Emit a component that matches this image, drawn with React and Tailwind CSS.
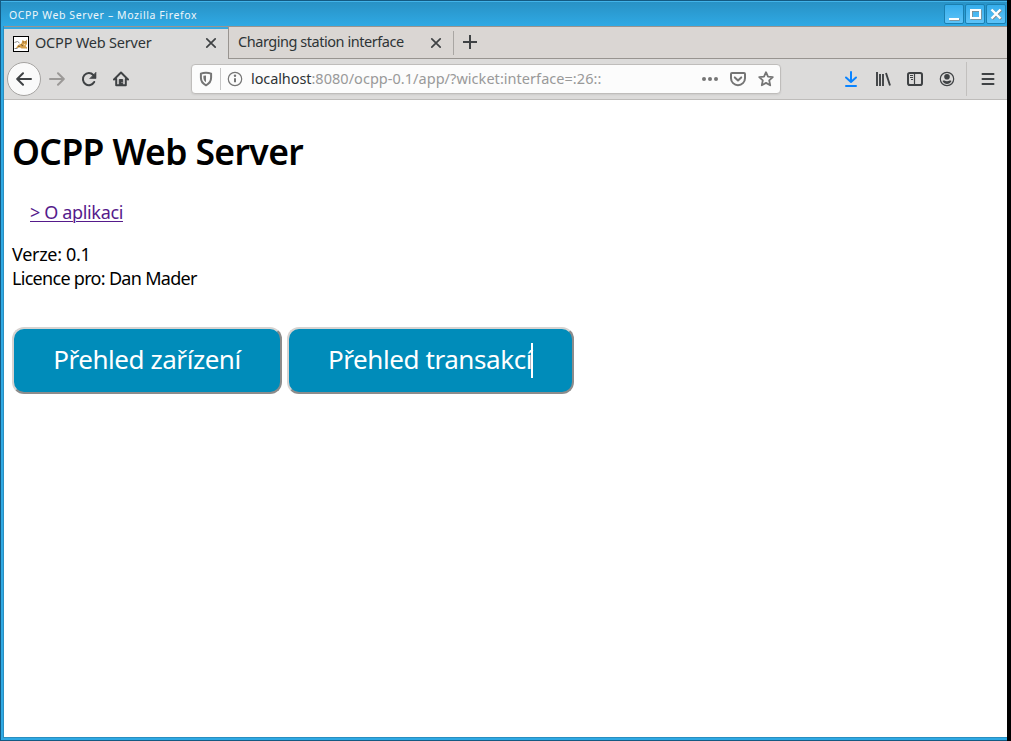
import React from "react";

function TitleButton({ children }) {
  return (
    <div className="h-5 w-5 rounded-[2px] border border-[#1b7fb0] bg-linear-to-b from-[#35adeb] to-[#5cc3f8]">
      <svg className="block h-[18px] w-[18px]" viewBox="0 0 18 18" fill="none" strokeWidth="2">
        <g stroke="#8b8580" transform="translate(.7 .7)">{children}</g>
        <g stroke="#ffffff">{children}</g>
      </svg>
    </div>
  );
}

function Icon({ className = "", children }) {
  return (
    <svg
      className={"block h-4 w-4 shrink-0 " + className}
      viewBox="0 0 16 16"
      fill="none"
      stroke="currentColor"
      strokeWidth="2"
      strokeLinecap="round"
      strokeLinejoin="round"
    >
      {children}
    </svg>
  );
}

function CloseIcon() {
  return (
    <Icon className="text-[#3f4244]">
      <path d="M3.8 3.8l8.4 8.4M12.2 3.8l-8.4 8.4" strokeWidth="1.7" />
    </Icon>
  );
}

function CatIcon() {
  return (
    <svg className="-mt-px block h-4 w-4 shrink-0" viewBox="0 0 16 16">
      <rect x=".5" y=".5" width="15" height="15" fill="#fff" stroke="#000" />
      <path d="M1.5 6.500l3-1 2 1.500M1.500 12.500h3M12 11l2 1" stroke="#888" fill="none" />
      <path d="M3 12l2-3 3.500-1.500 1-3.500 1.500 1h1.500l1.500-1.500v4.500l-1.500 2 1.500 1.500v1H8.500l-2-1.500-1.500 1z" fill="#d6a04a" />
      <path d="M9.800 6h1M12.200 6h1M5 10l2 1M8 8.500l2 1.500" stroke="#5d4526" strokeWidth=".8" />
      <path d="M10.500 8.200h2l-1 1.300z" fill="#fff4d8" />
    </svg>
  );
}

function Tabs() {
  return (
    <div className="flex h-[33px] border-t border-[#989490] bg-[#dad6d3]">
      <div className="flex h-8 w-[224px] items-center border-t-2 border-[#35a8e0] bg-[#dcdbda] pl-[9px] pr-[9px]">
        <CatIcon />
        <span className="ml-[6px] -mt-[5px] text-[14.5px] leading-5 tracking-[-0.2px]">OCPP Web Server</span>
        <div className="ml-auto -mt-[2px]"><CloseIcon /></div>
      </div>
      <div className="flex flex-1 items-center border-b border-l border-[#989490] pt-px">
        <span className="ml-[9px] -mt-[4px] w-[181px] whitespace-nowrap text-[14.5px] leading-5 tracking-[-0.46px]">Charging station interface</span>
        <div className="ml-[9px] -mt-px"><CloseIcon /></div>
        <div className="ml-[9px] -mt-px h-6 w-px bg-[#a9a6a3]" />
        <Icon className="ml-2 -mt-[2px] text-[#3f4244]">
          <path d="M8 1v14M1 8h14" strokeLinecap="butt" />
        </Icon>
      </div>
    </div>
  );
}

function Toolbar() {
  return (
    <div className="flex h-[41px] items-center border-b border-[#bebcba] bg-[#dcdbda] pl-[3px] text-[#3f4244]">
      <div className="flex h-[34px] w-[34px] items-center justify-center rounded-full border border-[#a5a3a1] bg-[#fafafa]">
        <Icon><path d="M15 8H1.500M7 2.200L1.200 8 7 13.800" /></Icon>
      </div>
      <Icon className="ml-2 text-[#9b9997]"><path d="M1 8h13.500M9 2.200L14.800 8 9 13.800" /></Icon>
      <Icon className="ml-4">
        <path d="M13.200 11A6 6 0 1 1 12.300 4" />
        <path d="M15 1.500v6H9z" fill="currentColor" strokeWidth=".6" />
      </Icon>
      <Icon className="ml-4">
        <path d="M1 8.500L8 1.500l7 7M3.200 8v6.200h9.600V8" />
        <path d="M6.300 14V8.500h3.400V14z" fill="currentColor" strokeWidth="1" />
        <circle cx="9" cy="11.400" r=".5" fill="#dcdbda" stroke="none" />
      </Icon>
      <div className="ml-[62px] flex h-[30px] w-[590px] items-center rounded-[4px] border border-[#bfbdbb] bg-[#fcfcfc] pl-[6px] pr-[6px] text-[#757575] shadow-[0_1px_2px_rgba(0,0,0,0.07)]">
        <Icon>
          <path d="M8 1.700c1.700 0 3.600.3 5.100.9v4c0 3.800-2 6.300-5.100 7.700-3.100-1.400-5.100-3.900-5.100-7.700v-4C4.400 2 6.300 1.700 8 1.700z" />
          <path d="M8 4.500v6.800C6.100 10 5.400 8.600 5.400 6.300V4.800z" fill="currentColor" stroke="none" />
        </Icon>
        <div className="ml-[6px] h-[22px] w-px bg-[#c6c6c6]" />
        <Icon className="ml-[6px]">
          <circle cx="8" cy="8" r="6.700" strokeWidth="1.200" />
          <path d="M8 7.300v4" strokeLinecap="butt" />
          <circle cx="8" cy="4.700" r="1.200" fill="currentColor" stroke="none" />
        </Icon>
        <span className="ml-[8px] -mt-[2px] whitespace-nowrap text-[14.5px] leading-5 tracking-[0.04px] text-[#999999]">
          <span className="tracking-[-0.1px] text-[#2e3436]">localhost</span>:8080/ocpp-0.1/app/?wicket:interface=:26::
        </span>
        <Icon className="ml-auto">
          <g fill="currentColor" stroke="none">
            <circle cx="2" cy="8" r="2" /><circle cx="8" cy="8" r="2" /><circle cx="14" cy="8" r="2" />
          </g>
        </Icon>
        <Icon className="ml-3">
          <path d="M2 2h12a1 1 0 0 1 1 1v4.200a7 7 0 0 1-14 0V3a1 1 0 0 1 1-1z" />
          <path d="M4.800 6.400L8 9.400l3.200-3" />
        </Icon>
        <Icon className="ml-3">
          <path d="M8 1.200l2 4.400 4.800.5-3.600 3.300 1 4.900L8 11.900l-4.200 2.400 1-4.900L1.200 6.100 6 5.600z" strokeWidth="1.800" />
        </Icon>
      </div>
      <Icon className="ml-[62px] text-[#0a84ff]">
        <path d="M8 1v9.500M3 6.500L8 11l5-4.500M3 15h10" />
      </Icon>
      <Icon className="ml-4">
        <path d="M2 1v14M5 3v12M8 3v12M11 2l4 12.500" strokeLinecap="butt" strokeWidth="1.900" />
      </Icon>
      <Icon className="ml-4">
        <rect x="1" y="2" width="14" height="12" rx="1.800" />
        <path d="M7.500 2v12" strokeLinecap="butt" strokeWidth="1.200" />
        <path d="M3 4.500h3M3 6.500h3M4 8.500h2" strokeWidth="1" strokeLinecap="butt" />
      </Icon>
      <Icon className="ml-4">
        <circle cx="8" cy="8" r="6.700" strokeWidth="1.200" />
        <circle cx="8" cy="5.800" r="2.800" fill="currentColor" stroke="none" />
        <path d="M3.500 10c1-.6 1.500-.6 2-.4.700.4 1.500.6 2.500.6s1.800-.2 2.500-.6c.5-.2 1-.2 2 .4-1 1.900-2.600 3-4.500 3s-3.500-1.100-4.500-3z" fill="currentColor" stroke="none" />
      </Icon>
      <div className="ml-[11px] h-[34px] w-px bg-[#c2c0be]" />
      <Icon className="ml-[13px]"><path d="M2.500 3h11M2.500 8h11M2.500 13h11" /></Icon>
    </div>
  );
}

export default function App() {
  return (
    <div className="flex h-[741px] w-[1011px] overflow-hidden bg-black font-['Noto_Sans',sans-serif] text-[#2e3436]">
      <div className="flex h-full w-[1007px] flex-col border-b border-l border-[#145a82] bg-[#2fa9e4]">
        <header className="flex h-[26px] items-center border-t border-[#145a82] bg-linear-to-b from-[#2891c4] to-[#2fa9e4] pl-2 pr-px shadow-[inset_0_1px_0_#42b4ea] pt-px">
          <span className="mt-[2px] text-[10.5px] leading-4 tracking-[0.6px] text-[#eef6fa]">OCPP Web Server – Mozilla Firefox</span>
          <div className="ml-auto flex gap-px">
            <TitleButton><path d="M4 14h10" /></TitleButton>
            <TitleButton><rect x="5" y="5" width="9" height="8" /></TitleButton>
            <TitleButton><path d="M4.500 4.500l9 9M13.500 4.500l-9 9" strokeWidth="2.400" /></TitleButton>
          </div>
        </header>
        <div className="flex min-h-0 flex-1 flex-col pb-[2px] pl-[2px]">
          <div className="flex min-h-0 flex-1 flex-col border-b border-l border-[#2a8fc0]">
            <Tabs />
            <Toolbar />
            <main className="flex-1 bg-white pl-2 text-black">
              <h1 className="mt-[26px] text-[35.5px] font-semibold leading-[50px] tracking-[-0.6px]">OCPP Web Server</h1>
              <p className="mt-[24px] pl-[18px] text-[18px] leading-6 tracking-[-0.35px]">
                <a className="text-[#551a8b] underline decoration-1 underline-offset-2">&gt; O aplikaci</a>
              </p>
              <p className="mt-[18px] text-[18px] leading-6 tracking-[-0.3px]">
                Verze: 0.1<br /><span className="tracking-[-0.7px]">Licence pro: Dan Mader</span>
              </p>
              <div className="mt-[37px] flex gap-[5px] text-[26px] leading-[36px] text-white">
                <button className="h-[67px] w-[270px] rounded-[12px] border-2 border-b-[#8c8c8c] border-l-[#d6d3d1] border-r-[#8c8c8c] border-t-[#d6d3d1] bg-[#008cba] pb-[3px] tracking-[-0.45px]">Přehled zařízení</button>
                <button className="flex h-[67px] w-[287px] items-center rounded-[12px] border-2 border-b-[#8c8c8c] border-l-[#d6d3d1] border-r-[#8c8c8c] border-t-[#d6d3d1] bg-[#008cba] pb-[3px] pl-[39px] tracking-[-0.42px]">
                  Přehled transakcí<span className="relative top-px -ml-px h-[35px] w-[2px] bg-white" />
                </button>
              </div>
            </main>
          </div>
        </div>
      </div>
    </div>
  );
}
